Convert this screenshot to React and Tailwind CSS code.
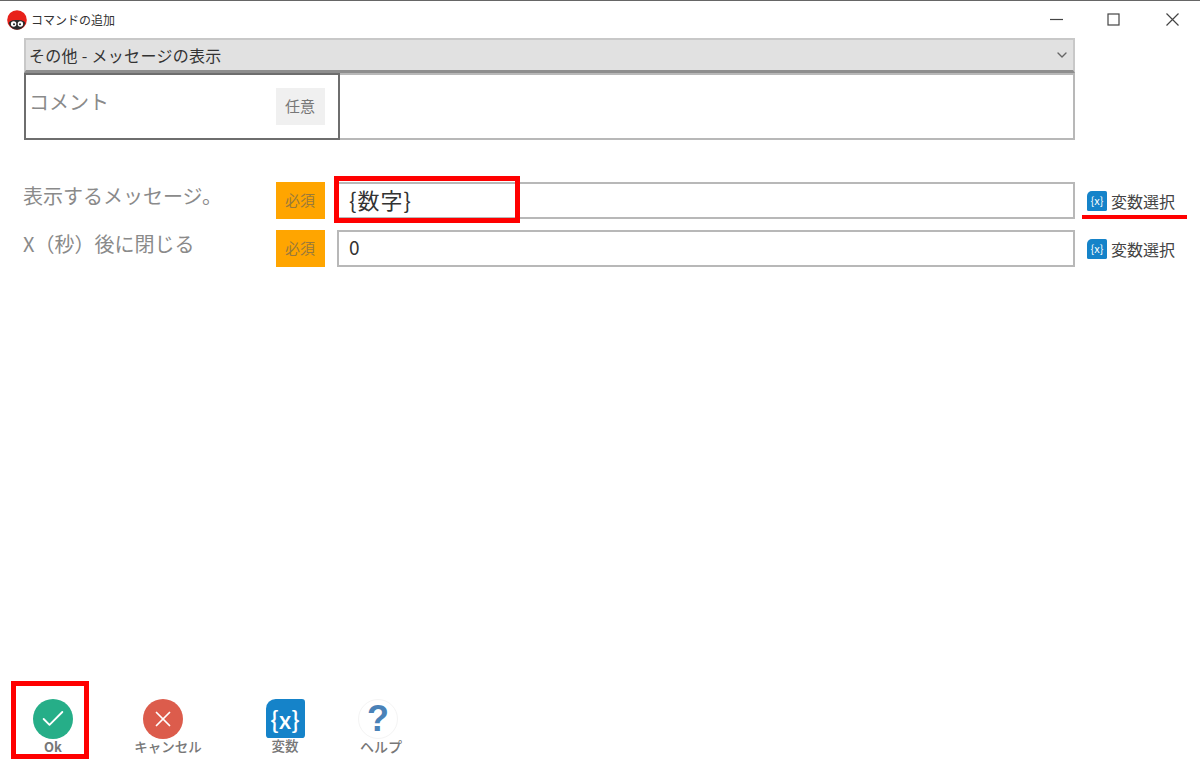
import { ChevronDown, Check, X } from "lucide-react";

const font = { fontFamily: '"Noto Sans CJK JP", "Liberation Sans", sans-serif' };

function Logo() {
  return (
    <svg width="20" height="20" viewBox="0 0 20 20">
      <circle cx="10" cy="10" r="9.8" fill="#e8211a" />
      <path d="M1.6 13c1.6-2.2 3.4-3 8.4-3s6.8.8 8.4 3A9.8 9.8 0 0 1 10 19.8 9.8 9.8 0 0 1 1.6 13z" fill="#2a2a2a" />
      <circle cx="6.6" cy="14" r="2.7" fill="#fff" />
      <circle cx="13.4" cy="14" r="2.7" fill="#fff" />
      <circle cx="7" cy="14.2" r="1" fill="#222" />
      <circle cx="13" cy="14.2" r="1" fill="#222" />
    </svg>
  );
}

function WindowControls() {
  return (
    <div className="ml-auto flex items-center">
      <svg width="13" height="13" viewBox="0 0 13 13" className="mr-[44px]" stroke="#444" strokeWidth="1.2">
        <path d="M0 6.5h13" />
      </svg>
      <svg width="13" height="13" viewBox="0 0 13 13" className="mr-[46px]" fill="none" stroke="#444" strokeWidth="1.2">
        <rect x="1" y="1" width="11" height="11" />
      </svg>
      <svg width="13" height="13" viewBox="0 0 13 13" className="mr-[21px]" stroke="#444" strokeWidth="1.2">
        <path d="M0.5 0.5l12 12M12.5 0.5l-12 12" />
      </svg>
    </div>
  );
}

function VarIcon({ size, text, className }) {
  return (
    <div
      className={`flex shrink-0 items-center justify-center rounded-tl-[25%] rounded-br-[8%] rounded-tr-[8%] rounded-bl-[8%] bg-[#1583c9] text-white ${className}`}
      style={{ width: size, height: size, fontSize: text }}
    >
      {"{x}"}
    </div>
  );
}

function VarSelect({ underline }) {
  return (
    <div className="relative ml-3 flex w-[100px] items-center gap-1 text-[16px] text-[#444]">
      <VarIcon size={20} text={11} className="font-normal" />
      <span className="whitespace-nowrap">変数選択</span>
      {underline && <div className="absolute left-[-5px] top-[26px] h-1 w-[105px] bg-[#ff0000]" />}
    </div>
  );
}

function Row({ label, value, valueClass, highlight, underline }) {
  return (
    <div className="flex h-[37px] items-center pl-[23px]">
      <div className="-mt-[9px] w-[253px] text-[20px] text-[#8a8a8a]">{label}</div>
      <div className="flex h-[37px] w-[49px] items-center justify-center bg-[#ffa500] pr-[1px] text-[15px] text-[#9a7a3a]">必須</div>
      <div className={`relative ml-3 flex h-[37px] w-[738px] items-center border-2 border-[#b8b8b8] px-[10px] pb-[3px] text-[#333] ${valueClass}`}>
        {value}
        {highlight && <div className="absolute left-[-5px] top-[-8px] h-[47px] w-[186px] border-[5px] border-[#ff0000]" />}
      </div>
      <VarSelect underline={underline} />
    </div>
  );
}

function ToolButton({ className, icon, label, bold, labelClass }) {
  return (
    <div className={`flex w-[80px] flex-col items-center ${className}`}>
      {icon}
      <span className={`whitespace-nowrap leading-[15px] text-[#777] ${bold ? "font-bold" : "font-medium"} ${labelClass}`}>{label}</span>
    </div>
  );
}

export default function App() {
  return (
    <div className="relative flex h-[759px] w-[1200px] flex-col overflow-hidden border-t border-[#666] bg-white" style={font}>
      {/* title bar */}
      <div className="flex h-[37px] shrink-0 items-center pl-[7px]">
        <Logo />
        <span className="ml-[4px] text-[12px] text-[#333]">コマンドの追加</span>
        <WindowControls />
      </div>

      {/* command select */}
      <div className="ml-[24px] flex h-[35px] w-[1051px] shrink-0 items-center justify-between border-2 border-b-[3px] border-[#c8c8c8] border-b-[#8e8e8e] bg-[#e1e1e1] pb-[1px] pl-[3px] pr-[3px] text-[16px] tracking-[0.3px] text-[#333]">
        <span>その他 - メッセージの表示</span>
        <ChevronDown size={16} className="text-[#666]" />
      </div>

      {/* comment */}
      <div className="ml-[24px] flex h-[67px] w-[1051px] shrink-0">
        <div className="flex w-[316px] border-2 border-[#6e6e6e] pl-[3px] pr-[13px] pt-[12px]">
          <span className="flex-1 text-[20px] leading-[30px] text-[#8a8a8a]">コメント</span>
          <div className="mt-[1px] flex h-[37px] w-[49px] items-center justify-center bg-[#f0f0f0] pr-[1px] text-[15px] text-[#777]">任意</div>
        </div>
        <div className="flex-1 border-y-2 border-r-2 border-[#b8b8b8]" />
      </div>

      {/* fields */}
      <div className="mt-[42px] flex flex-col gap-[11px]">
        <Row label="表示するメッセージ。" value="{数字}" valueClass="text-[22px] tracking-[1px]" highlight underline />
        <Row label="X（秒）後に閉じる" value="0" valueClass="text-[19px]" />
      </div>

      {/* bottom buttons */}
      <div className="mt-auto flex h-[60px] items-start text-center">
        <ToolButton
          className="ml-[13px]"
          bold
          label="Ok"
          labelClass="text-[13px]"
          icon={
            <div className="flex h-10 w-10 items-center justify-center rounded-full bg-[#26ae88]">
              <Check size={28} strokeWidth={1.6} className="text-white" />
            </div>
          }
        />
        <ToolButton
          className="ml-[30px]"
          label="キャンセル"
          labelClass="ml-[10px] text-[13.5px]"
          icon={
            <div className="flex h-10 w-10 items-center justify-center rounded-full bg-[#dc5c4c]">
              <X size={26} strokeWidth={1.6} className="text-white" />
            </div>
          }
        />
        <ToolButton className="ml-[42px]" label="変数" labelClass="text-[13.5px]" icon={<VarIcon size={39} text={24} className="font-medium" />} />
        <ToolButton
          className="ml-[13px]"
          label="ヘルプ"
          labelClass="ml-[6px] text-[14px]"
          icon={
            <div className="flex h-10 w-10 items-center justify-center rounded-full border border-[#f4f4f4] text-[36px] font-bold leading-none text-[#4a82b8]" style={{ fontFamily: '"Liberation Sans", sans-serif' }}>
              ?
            </div>
          }
        />
      </div>

      {/* annotation round the Ok button */}
      <div className="absolute left-[11px] top-[680px] h-[78px] w-[78px] border-[5px] border-[#ff0000]" />
    </div>
  );
}
